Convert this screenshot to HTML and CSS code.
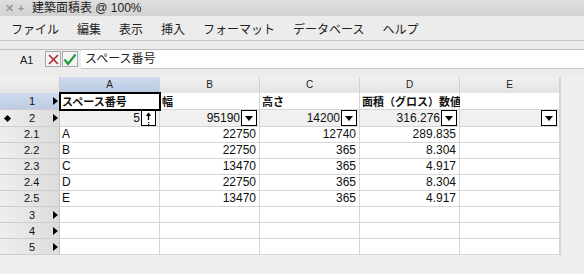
FILE: index.html
```html
<!DOCTYPE html>
<html lang="ja">
<head>
    <meta charset="UTF-8">
    <title>建築面積表 @ 100%</title>
    <link rel="stylesheet" href="styles.css">
</head>
<body>
    <div class="titlebar">
        <span class="win-btn">✕</span>
        <span class="win-btn">+</span>
        <span class="title">建築面積表 @ 100%</span>
    </div>
    <div class="menubar">
        <span>ファイル</span>
        <span>編集</span>
        <span>表示</span>
        <span>挿入</span>
        <span>フォーマット</span>
        <span>データベース</span>
        <span>ヘルプ</span>
    </div>
    <div class="formulabar">
        <span class="cell-ref">A1</span>
        <span class="fbtn cancel">
            <svg width="13" height="13" viewBox="0 0 13 13"><path d="M2 2 L11 11 M11 2 L2 11" stroke="#b0262c" stroke-width="1.6"/></svg>
        </span>
        <span class="fbtn accept">
            <svg width="14" height="13" viewBox="0 0 14 13"><path d="M1.5 6.5 L5 11 L12.5 1.5" stroke="#1f9a3a" stroke-width="2.2" fill="none"/></svg>
        </span>
        <div class="formula-input">スペース番号</div>
    </div>

    <div class="sheet">
        <div class="corner"></div>
        <div class="colhead sel">A</div>
        <div class="colhead">B</div>
        <div class="colhead">C</div>
        <div class="colhead">D</div>
        <div class="colhead">E</div>
        <div class="filler"></div>

        <div class="rowhead sel"><span class="num">1</span><span class="arrow"></span></div>
        <div class="cell head active">スペース番号</div>
        <div class="cell head">幅</div>
        <div class="cell head">高さ</div>
        <div class="cell head">面積（グロス）数値</div>
        <div class="cell head"></div>
        <div class="filler"></div>

        <div class="rowhead"><span class="dia"></span><span class="num">2</span><span class="arrow"></span></div>
        <div class="cell sum"><span class="val">5</span>
            <span class="sort"><svg width="13" height="15" viewBox="0 0 13 15"><path d="M6.5 2 L6.5 9" stroke="#000" stroke-width="1.4"/><path d="M4 5 L6.5 1.5 L9 5 Z" fill="#000"/><rect x="6" y="11" width="1.2" height="1.2" fill="#000"/><rect x="6" y="13" width="1.2" height="1.2" fill="#000"/></svg></span>
        </div>
        <div class="cell sum"><span class="val">95190</span><span class="dd"></span></div>
        <div class="cell sum"><span class="val">14200</span><span class="dd"></span></div>
        <div class="cell sum"><span class="val">316.276</span><span class="dd"></span></div>
        <div class="cell sum"><span class="val"></span><span class="dd"></span></div>
        <div class="filler"></div>

        <div class="rowhead"><span class="num sub">2.1</span></div>
        <div class="cell">A</div>
        <div class="cell num">22750</div>
        <div class="cell num">12740</div>
        <div class="cell num">289.835</div>
        <div class="cell"></div>
        <div class="filler"></div>

        <div class="rowhead"><span class="num sub">2.2</span></div>
        <div class="cell">B</div>
        <div class="cell num">22750</div>
        <div class="cell num">365</div>
        <div class="cell num">8.304</div>
        <div class="cell"></div>
        <div class="filler"></div>

        <div class="rowhead"><span class="num sub">2.3</span></div>
        <div class="cell">C</div>
        <div class="cell num">13470</div>
        <div class="cell num">365</div>
        <div class="cell num">4.917</div>
        <div class="cell"></div>
        <div class="filler"></div>

        <div class="rowhead"><span class="num sub">2.4</span></div>
        <div class="cell">D</div>
        <div class="cell num">22750</div>
        <div class="cell num">365</div>
        <div class="cell num">8.304</div>
        <div class="cell"></div>
        <div class="filler"></div>

        <div class="rowhead"><span class="num sub">2.5</span></div>
        <div class="cell">E</div>
        <div class="cell num">13470</div>
        <div class="cell num">365</div>
        <div class="cell num">4.917</div>
        <div class="cell"></div>
        <div class="filler"></div>

        <div class="rowhead"><span class="num">3</span><span class="arrow"></span></div>
        <div class="cell"></div><div class="cell"></div><div class="cell"></div><div class="cell"></div><div class="cell"></div>
        <div class="filler"></div>

        <div class="rowhead"><span class="num">4</span><span class="arrow"></span></div>
        <div class="cell"></div><div class="cell"></div><div class="cell"></div><div class="cell"></div><div class="cell"></div>
        <div class="filler"></div>

        <div class="rowhead"><span class="num">5</span><span class="arrow"></span></div>
        <div class="cell"></div><div class="cell"></div><div class="cell"></div><div class="cell"></div><div class="cell"></div>
        <div class="filler"></div>
    </div>
</body>
</html>
```

FILE: styles.css
```css
body {
    margin: 0;
    background-color: #efefef;
    color: #111;
    font-family: "Liberation Sans", "Noto Sans CJK JP", sans-serif;
    width: 584px;
    height: 274px;
    overflow: hidden;
}

.titlebar {
    height: 16px;
    display: flex;
    align-items: center;
    background: linear-gradient(#dedede, #d2d2d2);
    font-size: 12px;
    line-height: 16px;
}

.win-btn {
    color: #9a9a9a;
    font-size: 11px;
    font-weight: bold;
    width: 12px;
    text-align: center;
}

.win-btn:first-child {
    margin-left: 3px;
}

.title {
    margin-left: 5px;
    color: #222;
}

.menubar {
    height: 24px;
    display: flex;
    align-items: center;
    gap: 18px;
    padding-left: 11px;
    background-color: #ececec;
    border-bottom: 1px solid #c8c8c8;
    font-size: 12px;
    color: #222;
}

.formulabar {
    height: 27px;
    display: flex;
    align-items: flex-start;
    padding-top: 8px;
    box-sizing: content-box;
    background-color: #ececec;
    position: relative;
}

.formulabar::before {
    content: "";
    position: absolute;
    left: 0;
    right: 0;
    top: 8px;
    border-top: 1px solid #bdbdbd;
}

.cell-ref {
    width: 45px;
    padding-left: 20px;
    box-sizing: border-box;
    font-size: 11px;
    color: #222;
    margin-top: 5px;
}

.fbtn {
    width: 16px;
    height: 16px;
    box-sizing: border-box;
    border: 1px solid #a9a9a9;
    background-color: #f4f4f4;
    display: flex;
    align-items: center;
    justify-content: center;
    margin-top: 2px;
}

.fbtn.accept {
    margin-left: 1px;
}

.formula-input {
    flex: 1;
    margin-left: 3px;
    margin-top: 1px;
    height: 18px;
    background-color: #fff;
    border-bottom: 1px solid #c4c4c4;
    font-size: 12px;
    line-height: 18px;
    padding-left: 4px;
    color: #222;
}

.sheet {
    margin-top: 1px;
    display: grid;
    grid-template-columns: 60px repeat(5, 100px) 24px;
    grid-template-rows: 16px 17px 17px repeat(8, 16px);
    font-size: 12px;
}

.corner {
    background: linear-gradient(#efefef, #e6e6e6);
    border-right: 1px solid #c9c9c9;
}

.colhead {
    background: linear-gradient(#f1f1f1, #e3e3e3);
    border-right: 1px solid #cfcfcf;
    text-align: center;
    font-size: 10px;
    line-height: 16px;
    color: #222;
}

.colhead.sel {
    background: linear-gradient(#cfdcef, #b9c9e1);
}

.filler {
    background-color: #efefef;
    border-left: 1px solid #d6d6d6;
}

.rowhead {
    position: relative;
    background: linear-gradient(90deg, #eeeeee, #dcdcdc);
    border-bottom: 1px solid #cdcdcd;
    border-right: 1px solid #c4c4c4;
    font-size: 11px;
    line-height: 15px;
    color: #111;
}

.rowhead.sel {
    background: linear-gradient(#cddaee, #bdcce3);
}

.rowhead .num {
    position: absolute;
    left: 29px;
    top: 1px;
}

.rowhead .num.sub {
    left: 24px;
    top: 0;
}

.rowhead .arrow {
    position: absolute;
    left: 53px;
    top: 4px;
    width: 0;
    height: 0;
    border-top: 4px solid transparent;
    border-bottom: 4px solid transparent;
    border-left: 5px solid #000;
}

.rowhead .dia {
    position: absolute;
    left: 5px;
    top: 6px;
    width: 5px;
    height: 5px;
    background-color: #000;
    transform: rotate(45deg);
}

.cell {
    position: relative;
    background-color: #fff;
    border-right: 1px solid #d6d6d6;
    border-bottom: 1px solid #d6d6d6;
    line-height: 15px;
    padding: 0 3px 0 2px;
    white-space: nowrap;
}

.cell.num {
    text-align: right;
}

.cell.head {
    font-family: "Noto Sans CJK JP", sans-serif;
    font-weight: bold;
    font-size: 11px;
    line-height: 16px;
}

.cell.active {
    outline: 2px solid #000;
    outline-offset: -1px;
    z-index: 1;
}

.cell.sum {
    background-color: #f0f0f0;
    display: flex;
    justify-content: flex-end;
    align-items: stretch;
    padding-right: 0;
}

.cell.sum .val {
    margin-right: 1px;
    line-height: 17px;
}

.dd,
.sort {
    width: 16px;
    box-sizing: border-box;
    border: 1px solid #000;
    background-color: #fff;
    margin-right: 2px;
    position: relative;
}

.dd::after {
    content: "";
    position: absolute;
    left: 3px;
    top: 5px;
    border-left: 4px solid transparent;
    border-right: 4px solid transparent;
    border-top: 5px solid #000;
}

.sort {
    width: 15px;
    margin-right: 3px;
    display: flex;
    justify-content: center;
}
```
